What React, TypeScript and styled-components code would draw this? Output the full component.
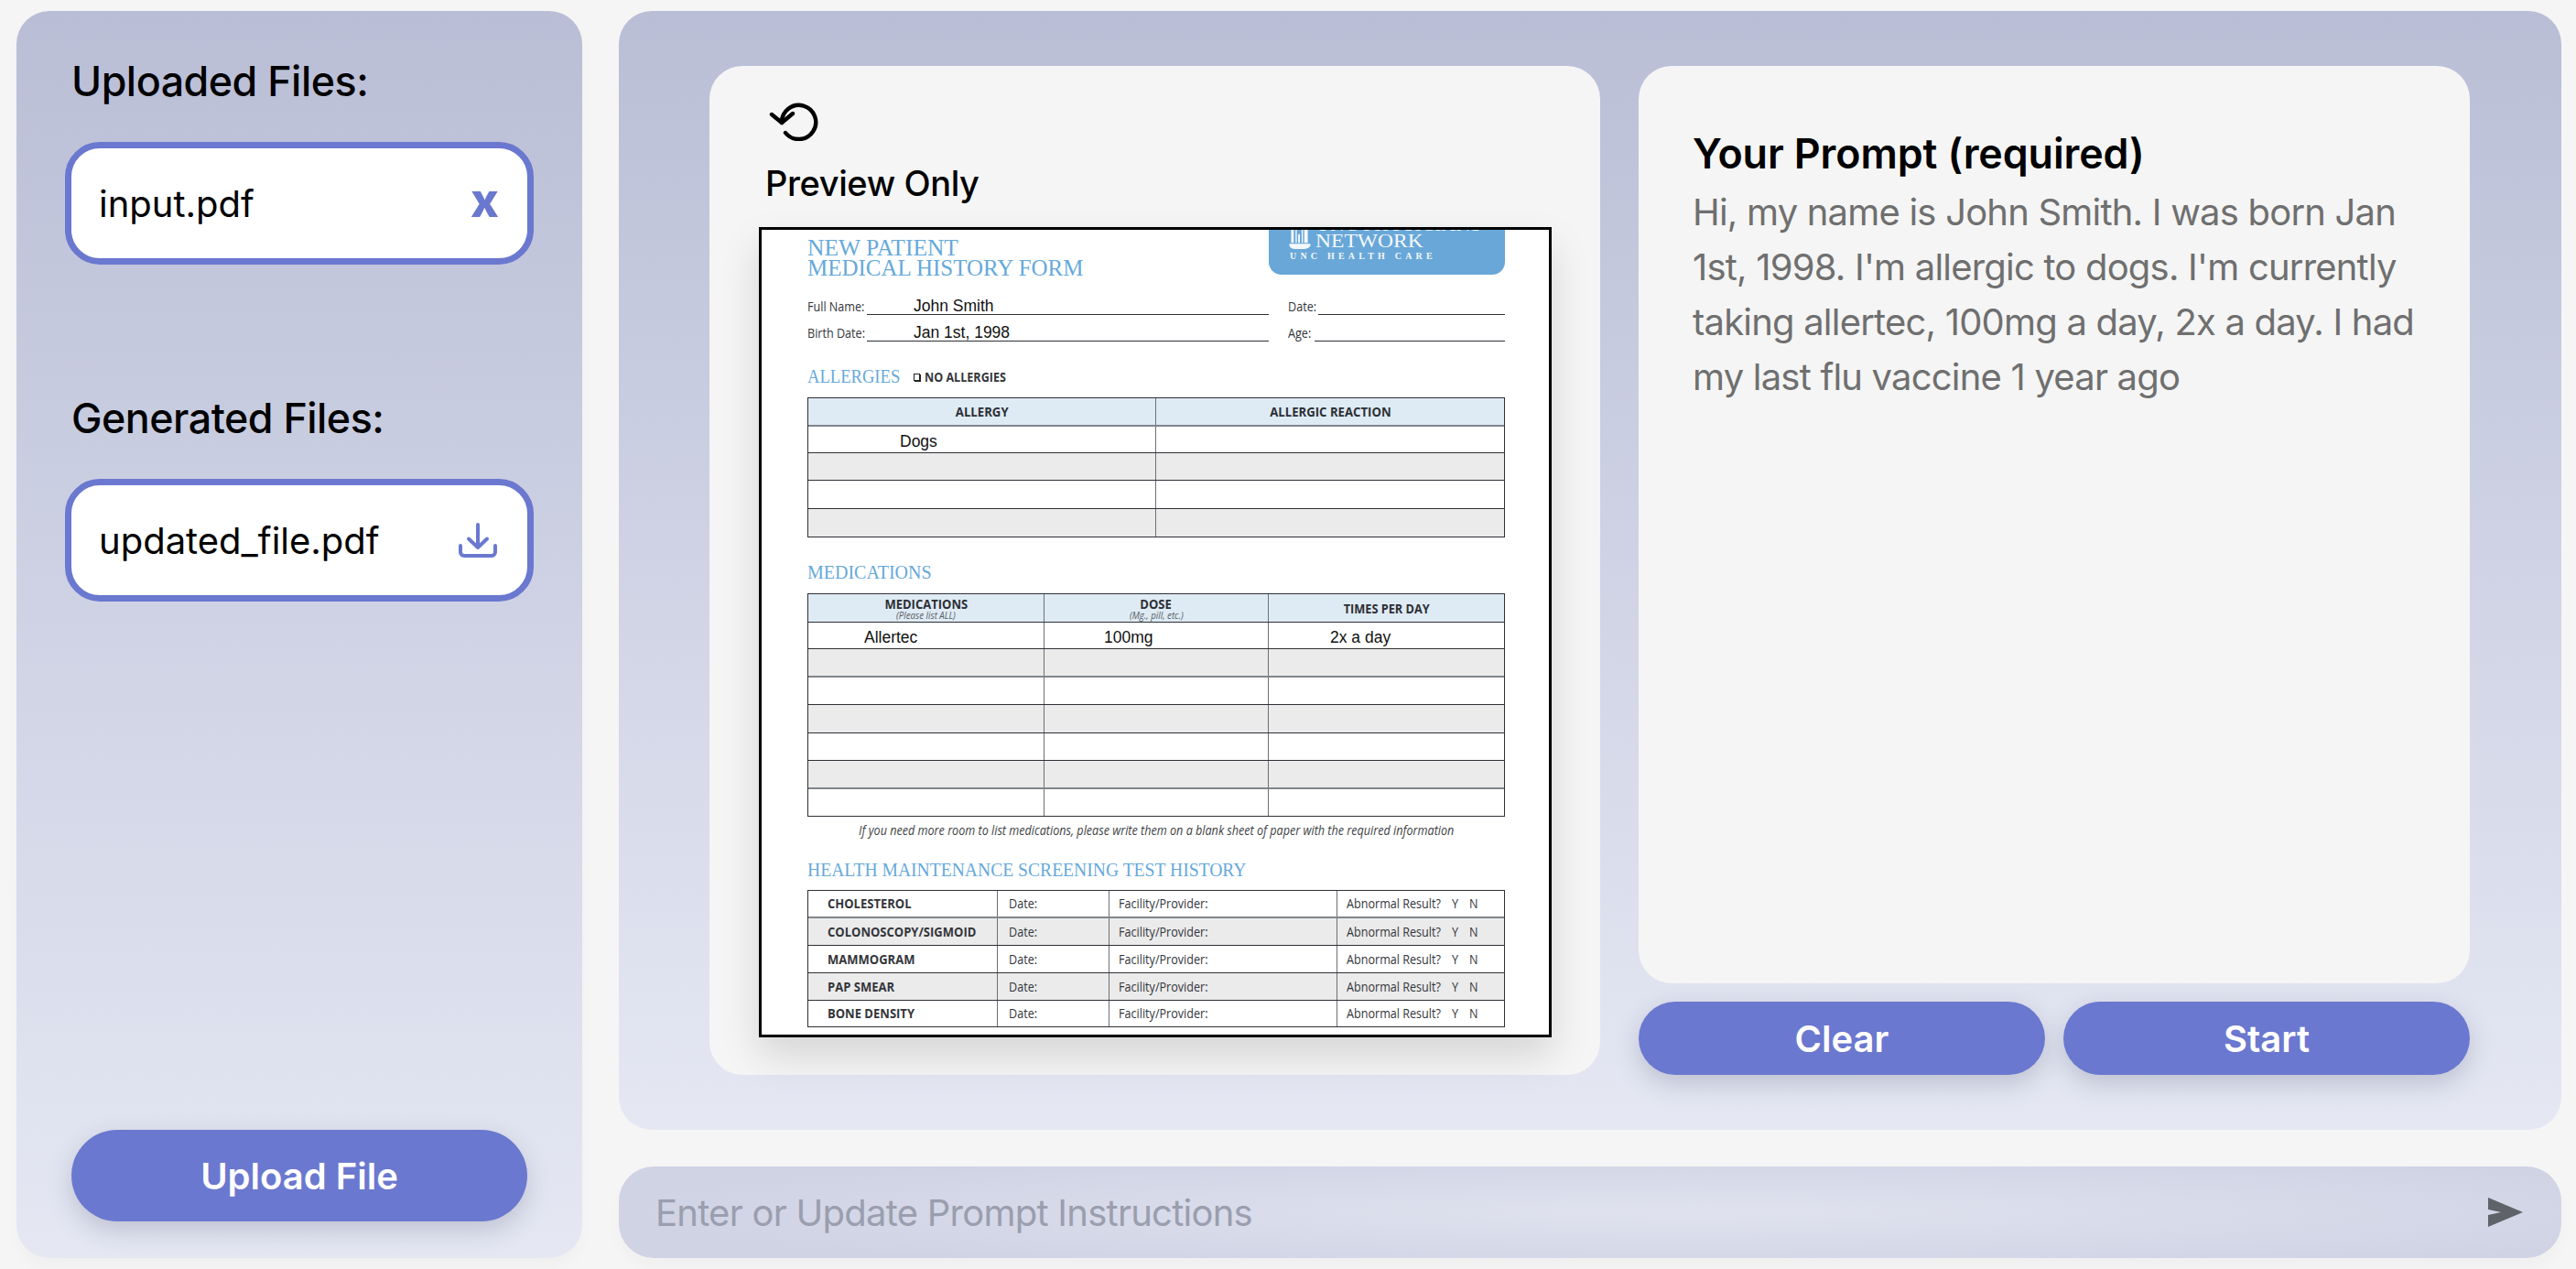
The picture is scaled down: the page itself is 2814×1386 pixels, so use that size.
import React from "react";
import styled, { createGlobalStyle } from "styled-components";

const Global = createGlobalStyle`
  html, body { margin: 0; padding: 0; background: #f5f5f5; }
  * { box-sizing: border-box; }
`;
const accent = "#6b78cf";
const Page = styled.div`
  width: 2814px; height: 1386px; padding: 12px 16px 12px 18px; display: grid; grid-template-columns: 618px 2122px; column-gap: 40px;
  font-family: Inter, "Noto Sans", sans-serif; color: #000; overflow: hidden;
`;
const Sidebar = styled.aside`
  display: flex; flex-direction: column; padding: 47px 53px 40px; border-radius: 36px;
  background: linear-gradient(180deg, #b9bed6 0%, #e5e8f3 100%); box-shadow: 0 10px 16px rgba(0,0,0,.025);
`;
const SideHeading = styled.h2<{ $top?: number }>`
  margin: ${(p) => p.$top ?? 0}px 0 0; padding-left: 7px; font-size: 44.8px; line-height: 60px; font-weight: 500; letter-spacing: -.5px;
`;
const FileChip = styled.div`
  margin-top: 36px; height: 134px; display: flex; align-items: center; justify-content: space-between; padding: 0 31px 0 30px;
  background: #fff; border: 7px solid ${accent}; border-radius: 38px; font-size: 40px; flex: none;
`;
const RemoveMark = styled.span`font-size: 52px; font-weight: 800; color: ${accent}; line-height: 1; margin-top: -6px;`;
const PillButton = styled.button<{ $r: number; $h: number }>`
  border: 0; background: ${accent}; color: #fff; font: 600 40px Inter, sans-serif; height: ${(p) => p.$h}px; border-radius: ${(p) => p.$r}px;
  box-shadow: 0 10px 28px rgba(40,45,80,.2); flex: 1;
`;
const UploadRow = styled.div`margin-top: auto; display: flex; padding: 0 7px;`;
const Right = styled.div`display: flex; flex-direction: column; gap: 40px;`;
const Main = styled.main`
  flex: 1; display: flex; gap: 42px; padding: 60px 0 60px 99px; border-radius: 36px;
  background: linear-gradient(180deg, #b9bed6 0%, #e5e8f3 100%);
`;
const PreviewCard = styled.section`
  width: 973px; border-radius: 36px; background: #f5f5f5; padding: 36px 0 0 54px; display: flex; flex-direction: column;
`;
const HistoryIcon = styled.svg`display: block; width: 54px; height: 46px; margin-left: 11px; flex: none;`;
const PreviewTitle = styled.h3`margin: 22px 0 0 7px; font-size: 38px; line-height: 48px; font-weight: 500; letter-spacing: -.4px;`;
const PdfSheet = styled.div`
  margin-top: 24px; width: 866px; height: 885px; border: 3px solid #000; background: #fff; padding: 0 48px 0 50px; overflow: hidden; flex: none;
  box-shadow: 0 20px 40px rgba(0,0,0,.13); font-family: "Open Sans", sans-serif; color: #33353a;
`;
const FormHead = styled.div`height: 49px; display: flex; justify-content: space-between;`;
const FormTitle = styled.div`
  padding-top: 9px; font: 26px/22px "Liberation Serif", serif; color: #66a9da; white-space: nowrap;
`;
const Squeezed = styled.span<{ $sx: number; $center?: boolean; $w?: number }>`
  display: inline-block; white-space: nowrap; transform: scaleX(${(p) => p.$sx}); transform-origin: ${(p) => (p.$center ? "center" : "left")} center;
  ${(p) => (p.$w ? `width: ${p.$w}px;` : "")}
`;
const Logo = styled.div`
  width: 258px; background: #68a7d8; border-radius: 0 0 14px 14px; padding-left: 21px; color: #f4f8fc; overflow: hidden; font-family: "Liberation Serif", serif;
`;
const LogoTop = styled.div`display: flex; gap: 4px; margin-top: -15px;`;
const LogoMark = styled.svg`display: block; width: 26px; height: 22px; flex: none; margin-top: 15px;`;
const LogoName = styled.div`font-size: 22px; line-height: 18px;`;
const LogoSub = styled.div`font-size: 10px; line-height: 12px; letter-spacing: 4.2px; font-weight: 700; margin: 1px 0 0 2px;`;
const Fields = styled.div`margin-top: 22px; display: grid; grid-template-columns: 504px 237px; column-gap: 21px; row-gap: 7px;`;
const Field = styled.div`display: flex; align-items: flex-end; height: 22px;`;
const FieldLabel = styled.div<{ $w: number }>`width: ${(p) => p.$w}px; flex: none; font-size: 14px; line-height: 18px; white-space: nowrap;`;
const FieldLine = styled.div`
  flex: 1; height: 22px; border-bottom: 1px solid #2e3036; padding: 2px 0 0 51px; font: 17.5px/20px "Liberation Sans", sans-serif; color: #111; white-space: nowrap;
`;
const SectionTitle = styled.div<{ $top: number; $bottom?: number }>`
  margin: ${(p) => p.$top}px 0 ${(p) => p.$bottom ?? 13}px; display: flex; align-items: center; height: 20px; font: 20px/20px "Liberation Serif", serif; color: #66a9da; white-space: nowrap;
`;
const NoneCheck = styled.span`
  display: flex; align-items: center; gap: 5px; font: 700 13.5px/20px "Open Sans", sans-serif; color: #33353a; margin-top: 2px;
`;
const NoneBox = styled.span`width: 7px; height: 8px; border: 1px solid #222; box-shadow: 1px 1px 0 #222; flex: none;`;
const Grid = styled.div`border: solid #2e3036; border-width: 1px 1px 0;`;
const Row = styled.div<{ $cols: string; $h: number; $bg: string; $soft?: boolean }>`
  display: grid; grid-template-columns: ${(p) => p.$cols}; height: ${(p) => p.$h}px; background: ${(p) => p.$bg};
  border-bottom: ${(p) => (p.$soft ? "2px solid #80848c" : "1px solid #2e3036")};
`;
const Cell = styled.div<{ $pl?: number; $center?: boolean }>`
  display: flex; flex-direction: column; justify-content: center; padding-left: ${(p) => p.$pl ?? 0}px; border-right: 1px solid #6d6f75; min-width: 0;
  ${(p) => (p.$center ? "align-items: center;" : "align-items: flex-start;")} white-space: nowrap;
  &:last-child { border-right: 0; }
`;
const CellHead = styled.div`font: 700 14px/15px "Open Sans", sans-serif; color: #2d2f34;`;
const CellSub = styled.div`font: italic 400 10px/10px "Open Sans", sans-serif; color: #5a5c62;`;
const Filled = styled.div`font: 17.5px/20px "Liberation Sans", sans-serif; color: #111; padding-top: 3px;`;
const CellText = styled.div<{ $bold?: boolean }>`
  display: flex; font: ${(p) => (p.$bold ? 700 : 400)} 14px/18px "Open Sans", sans-serif; color: #33353a;
`;
const FormNote = styled.div`
  margin-top: 7px; height: 16px; text-align: center; font: italic 400 14px/16px "Open Sans", sans-serif; color: #3d3f44;
`;
const PromptColumn = styled.section`width: 908px; display: flex; flex-direction: column; gap: 20px;`;
const PromptCard = styled.div`flex: 1; border-radius: 36px; background: #f5f5f5; padding: 66px 59px 0;`;
const PromptTitle = styled.h3`margin: 0; font-size: 44.8px; line-height: 60px; font-weight: 600; letter-spacing: -.1px;`;
const PromptBody = styled.p`margin: 4px 0 0; font-size: 40px; line-height: 60px; color: #6f6f6f; font-weight: 400; letter-spacing: -.8px;`;
const Actions = styled.div`display: flex; gap: 20px;`;
const InputBar = styled.div`
  height: 100px; flex: none; border-radius: 38px; display: flex; align-items: center; justify-content: space-between; padding: 0 42px 0 40px;
  background: radial-gradient(ellipse 55% 70% at 55% 50%, #e0e2ef 0%, #d0d3e4 100%), #d0d3e4;
  box-shadow: 0 10px 16px rgba(0,0,0,.025);
`;
const InputHint = styled.span`font-size: 40px; color: #9a9eae; letter-spacing: -.75px;`;
const SendIcon = styled.svg`display: block; width: 38px; height: 32px;`;
const DownloadIcon = styled.svg`display: block; width: 42px; height: 38px; margin-right: 2px;`;

const c1 = "380px 380px";
const c2 = "258px 245px 257px";
const c3 = "207px 122px 249px 182px";
const white = "#fff";
const gray = "#ebebeb";
const blue = "#deebf5";
const tests = ["CHOLESTEROL", "COLONOSCOPY/SIGMOID", "MAMMOGRAM", "PAP SMEAR", "BONE DENSITY"];
const testHeights = [30, 30, 30, 30, 29];

export default function App() {
  return (
    <Page>
      <Global />
      <Sidebar>
        <SideHeading>Uploaded Files:</SideHeading>
        <FileChip>
          <span>input.pdf</span>
          <RemoveMark>x</RemoveMark>
        </FileChip>
        <SideHeading $top={138}>Generated Files:</SideHeading>
        <FileChip>
          <span>updated_file.pdf</span>
          <DownloadIcon viewBox="0 0 42 38" fill="none" stroke={accent} strokeWidth="4" strokeLinecap="round" strokeLinejoin="round">
            <path d="M21 2V27M11 17.5L21 27L31 17.5" />
            <path d="M2 25V32a4 4 0 0 0 4 4H36a4 4 0 0 0 4-4V25" />
          </DownloadIcon>
        </FileChip>
        <UploadRow>
          <PillButton $r={50} $h={100}>Upload File</PillButton>
        </UploadRow>
      </Sidebar>
      <Right>
        <Main>
          <PreviewCard>
            <HistoryIcon viewBox="0 0 54 46" fill="none" stroke="#000" strokeWidth="4.4" strokeLinecap="round" strokeLinejoin="round">
              <path d="M14 26A18.6 18.6 0 1 1 18 37" />
              <path d="M3 17L14 26L26 16" />
            </HistoryIcon>
            <PreviewTitle>Preview Only</PreviewTitle>
            <PdfSheet>
              <FormHead>
                <FormTitle>
                  <Squeezed $sx={0.98}>NEW PATIENT</Squeezed>
                  <br />
                  <Squeezed $sx={0.96}>MEDICAL HISTORY FORM</Squeezed>
                </FormTitle>
                <Logo>
                  <LogoTop>
                    <LogoMark viewBox="0 9 26 23" fill="#f4f8fc">
                      <path d="M3 0h3v24H3zM8 0h1.5v24H8zM11 14h2v10h-2zM15 0h1.5v24H15zM18 0h4v24h-4zM1 25h24v2q-2 4-8 4H8q-6 0-7-4z" />
                    </LogoMark>
                    <LogoName>
                      <div>UNC PHYSICIANS</div>
                      <Squeezed $sx={1.07}>NETWORK</Squeezed>
                    </LogoName>
                  </LogoTop>
                  <LogoSub>UNC HEALTH CARE</LogoSub>
                </Logo>
              </FormHead>
              <Fields>
                <Field>
                  <FieldLabel $w={65}><Squeezed $sx={0.9}>Full Name:</Squeezed></FieldLabel>
                  <FieldLine>John Smith</FieldLine>
                </Field>
                <Field>
                  <FieldLabel $w={33}><Squeezed $sx={0.9}>Date:</Squeezed></FieldLabel>
                  <FieldLine />
                </Field>
                <Field>
                  <FieldLabel $w={65}><Squeezed $sx={0.9}>Birth Date:</Squeezed></FieldLabel>
                  <FieldLine>Jan 1st, 1998</FieldLine>
                </Field>
                <Field>
                  <FieldLabel $w={29}><Squeezed $sx={0.9}>Age:</Squeezed></FieldLabel>
                  <FieldLine />
                </Field>
              </Fields>
              <SectionTitle $top={28}>
                <Squeezed $sx={0.93} $w={116}>ALLERGIES</Squeezed>
                <NoneCheck><NoneBox /><Squeezed $sx={0.93}>NO ALLERGIES</Squeezed></NoneCheck>
              </SectionTitle>
              <Grid>
                <Row $cols={c1} $h={31} $bg={blue} $soft>
                  <Cell $center><CellHead><Squeezed $sx={0.94} $center>ALLERGY</Squeezed></CellHead></Cell>
                  <Cell $center><CellHead><Squeezed $sx={0.94} $center>ALLERGIC REACTION</Squeezed></CellHead></Cell>
                </Row>
                <Row $cols={c1} $h={29} $bg={white}>
                  <Cell $pl={100}><Filled>Dogs</Filled></Cell><Cell />
                </Row>
                <Row $cols={c1} $h={30} $bg={gray}><Cell /><Cell /></Row>
                <Row $cols={c1} $h={31} $bg={white}><Cell /><Cell /></Row>
                <Row $cols={c1} $h={31} $bg={gray}><Cell /><Cell /></Row>
              </Grid>
              <SectionTitle $top={28}><Squeezed $sx={1}>MEDICATIONS</Squeezed></SectionTitle>
              <Grid>
                <Row $cols={c2} $h={31} $bg={blue}>
                  <Cell $center>
                    <CellHead><Squeezed $sx={0.93} $center>MEDICATIONS</Squeezed></CellHead>
                    <CellSub><Squeezed $sx={0.97} $center>(Please list ALL)</Squeezed></CellSub>
                  </Cell>
                  <Cell $center>
                    <CellHead><Squeezed $sx={0.93} $center>DOSE</Squeezed></CellHead>
                    <CellSub><Squeezed $sx={0.97} $center>(Mg., pill, etc.)</Squeezed></CellSub>
                  </Cell>
                  <Cell $center><CellHead><Squeezed $sx={0.91} $center>TIMES PER DAY</Squeezed></CellHead></Cell>
                </Row>
                <Row $cols={c2} $h={29} $bg={white}>
                  <Cell $pl={61}><Filled>Allertec</Filled></Cell>
                  <Cell $pl={65}><Filled>100mg</Filled></Cell>
                  <Cell $pl={67}><Filled>2x a day</Filled></Cell>
                </Row>
                <Row $cols={c2} $h={31} $bg={gray} $soft><Cell /><Cell /><Cell /></Row>
                <Row $cols={c2} $h={30} $bg={white}><Cell /><Cell /><Cell /></Row>
                <Row $cols={c2} $h={31} $bg={gray}><Cell /><Cell /><Cell /></Row>
                <Row $cols={c2} $h={30} $bg={white}><Cell /><Cell /><Cell /></Row>
                <Row $cols={c2} $h={31} $bg={gray} $soft><Cell /><Cell /><Cell /></Row>
                <Row $cols={c2} $h={30} $bg={white}><Cell /><Cell /><Cell /></Row>
              </Grid>
              <FormNote>
                <Squeezed $sx={0.9} $center>If you need more room to list medications, please write them on a blank sheet of paper with the required information</Squeezed>
              </FormNote>
              <SectionTitle $top={25} $bottom={12}><Squeezed $sx={0.98}>HEALTH MAINTENANCE SCREENING TEST HISTORY</Squeezed></SectionTitle>
              <Grid>
                {tests.map((t, i) => (
                  <Row key={t} $cols={c3} $h={testHeights[i]} $bg={i % 2 ? gray : white} $soft={i === 0}>
                    <Cell $pl={21}><CellText $bold><Squeezed $sx={0.93}>{t}</Squeezed></CellText></Cell>
                    <Cell $pl={12}><CellText><Squeezed $sx={0.9}>Date:</Squeezed></CellText></Cell>
                    <Cell $pl={10}><CellText><Squeezed $sx={0.9}>Facility/Provider:</Squeezed></CellText></Cell>
                    <Cell $pl={10}>
                      <CellText>
                        <Squeezed $sx={0.9} $w={115}>Abnormal Result?</Squeezed>
                        <Squeezed $sx={0.9} $w={19}>Y</Squeezed>
                        <Squeezed $sx={0.9}>N</Squeezed>
                      </CellText>
                    </Cell>
                  </Row>
                ))}
              </Grid>
            </PdfSheet>
          </PreviewCard>
          <PromptColumn>
            <PromptCard>
              <PromptTitle>Your Prompt (required)</PromptTitle>
              <PromptBody>Hi, my name is John Smith. I was born Jan 1st, 1998. I'm allergic to dogs. I'm currently taking allertec, 100mg a day, 2x a day. I had my last flu vaccine 1 year ago</PromptBody>
            </PromptCard>
            <Actions>
              <PillButton $r={40} $h={80}>Clear</PillButton>
              <PillButton $r={40} $h={80}>Start</PillButton>
            </Actions>
          </PromptColumn>
        </Main>
        <InputBar>
          <InputHint>Enter or Update Prompt Instructions</InputHint>
          <SendIcon viewBox="0 0 38 32" fill="#5f6268"><path d="M0 0L38 16L0 32V19L14 16L0 13Z" /></SendIcon>
        </InputBar>
      </Right>
    </Page>
  );
}
